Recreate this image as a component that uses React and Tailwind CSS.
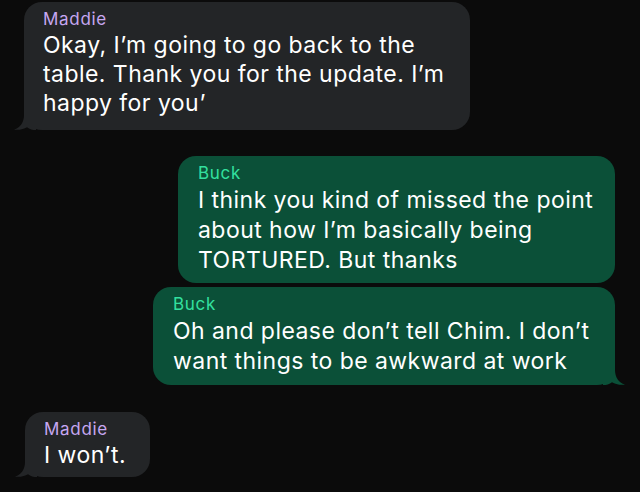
import React from 'react';

const font = { fontFamily: 'Inter, "Noto Sans", sans-serif' };

function Tail({ side, color }) {
    // iMessage-like tail drawn over the bubble's bottom corner
    const pos = side === 'left' ? 'left-[-10px]' : 'right-[-10px] scale-x-[-1]';
    return (
        <svg className={`absolute bottom-0 ${pos} w-[22px] h-[22px]`} viewBox="0 0 22 22">
            <path d="M10 0 V7 C10 14 6.5 19.5 0 21.6 C5 22.4 10 21 13 19.2 C15.5 21.2 18.5 22 22 22 V0 Z" fill={color} />
        </svg>
    );
}

function Bubble({ name, lines, side, tail, className }) {
    const isMe = side === 'right';
    const bg = isMe ? '#0b5038' : '#232527';
    return (
        <div className={`relative rounded-[18px] pt-[7px] ${isMe ? 'bg-[#0b5038] pl-[20px]' : 'bg-[#232527] pl-[19px]'} ${className}`}>
            {tail && <Tail side={side} color={bg} />}
            <div className={`relative text-[17px] leading-[20px] tracking-[0.7px] ${isMe ? 'text-[#33e09f]' : 'text-[#c6a7f1]'}`}>{name}</div>
            <div className={`relative text-[23px] tracking-[0.45px] text-white whitespace-nowrap ${isMe ? 'leading-[30px]' : 'leading-[29px]'} mt-[2px]`}>
                {lines.map((l, i) => (
                    <div key={i}>{l}</div>
                ))}
            </div>
        </div>
    );
}

export default function App() {
    return (
        <div className="w-[640px] h-[492px] bg-[#0b0b0b] overflow-hidden flex flex-col" style={font}>
            <Bubble
                name="Maddie"
                side="left"
                tail
                className="ml-[24px] mt-[2px] w-[446px] h-[128px]"
                lines={['Okay, I’m going to go back to the', 'table. Thank you for the update. I’m', 'happy for you’']}
            />
            <Bubble
                name="Buck"
                side="right"
                className="self-end mr-[25px] mt-[26px] w-[437px] h-[127px]"
                lines={['I think you kind of missed the point', 'about how I’m basically being', 'TORTURED. But thanks']}
            />
            <Bubble
                name="Buck"
                side="right"
                tail
                className="self-end mr-[25px] mt-[4px] w-[462px] h-[98px]"
                lines={['Oh and please don’t tell Chim. I don’t', 'want things to be awkward at work']}
            />
            <Bubble
                name="Maddie"
                side="left"
                tail
                className="ml-[25px] mt-[27px] w-[125px] h-[65px] pt-[5px]"
                lines={['I won’t.']}
            />
        </div>
    );
}
